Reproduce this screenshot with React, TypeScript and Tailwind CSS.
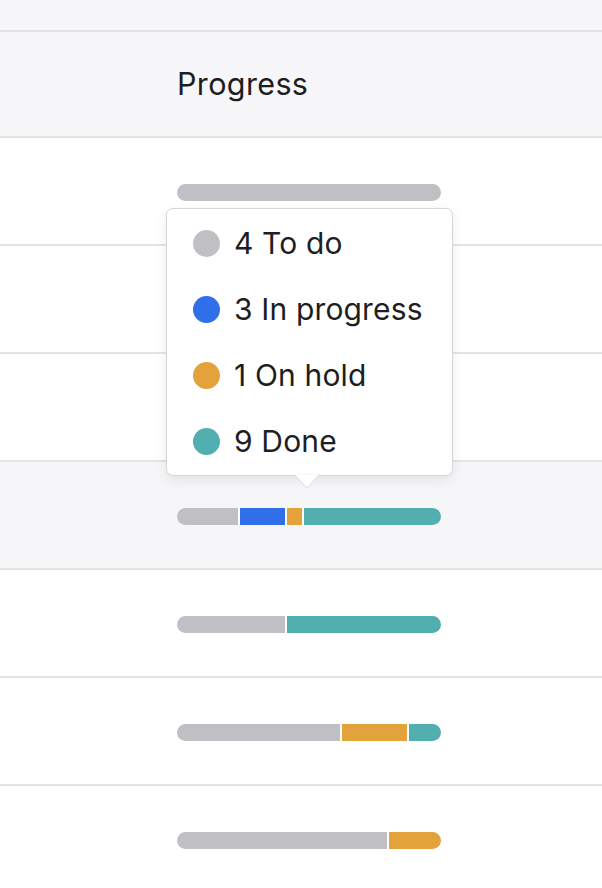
const COLORS = {
  todo: 'bg-[#c0bfc4]',
  progress: 'bg-[#2f6fe9]',
  hold: 'bg-[#e3a23a]',
  done: 'bg-[#51afb0]',
};

type Seg = { key: keyof typeof COLORS; count: number };

const rows: { segs: Seg[]; hover?: boolean }[] = [
  { segs: [{ key: 'todo', count: 1 }] },
  { segs: [{ key: 'todo', count: 1 }] },
  { segs: [{ key: 'todo', count: 1 }] },
  {
    segs: [
      { key: 'todo', count: 4 },
      { key: 'progress', count: 3 },
      { key: 'hold', count: 1 },
      { key: 'done', count: 9 },
    ],
    hover: true,
  },
  {
    segs: [
      { key: 'todo', count: 7 },
      { key: 'done', count: 10 },
    ],
  },
  {
    segs: [
      { key: 'todo', count: 10 },
      { key: 'hold', count: 4 },
      { key: 'done', count: 2 },
    ],
  },
  {
    segs: [
      { key: 'todo', count: 4 },
      { key: 'hold', count: 1 },
    ],
  },
];

const legend = [
  { label: '4 To do', color: COLORS.todo },
  { label: '3 In progress', color: COLORS.progress },
  { label: '1 On hold', color: COLORS.hold },
  { label: '9 Done', color: COLORS.done },
];

function ProgressBar({ segs }: { segs: Seg[] }) {
  return (
    <div className="flex h-[17px] w-[264px] overflow-hidden rounded-full">
      {segs.map((s, i) => (
        <div
          key={i}
          className={`${COLORS[s.key]} h-full ${i > 0 ? 'border-l-2 border-white' : ''}`}
          style={{ flexGrow: s.count, flexBasis: 0 }}
        />
      ))}
    </div>
  );
}

export default function App() {
  return (
    <div
      className="relative min-h-[888px] overflow-hidden bg-white text-[#1e1e22]"
      style={{ fontFamily: 'Inter, "Noto Sans", sans-serif' }}
    >
      <div className="h-[32px] border-b-2 border-[#e4e4e7] bg-[#f7f7f9]" />
      <div className="flex h-[106px] items-center border-b-2 border-[#e4e4e7] bg-[#f7f7f9] pl-[177px]">
        <span className="text-[30.5px] tracking-[0.012em]">Progress</span>
      </div>
      {rows.map((r, i) => (
        <div
          key={i}
          className={`flex h-[108px] items-center border-b-2 border-[#e4e4e7] pl-[177px] pt-[2px] ${
            r.hover ? 'bg-[#f6f6f8]' : 'bg-white'
          }`}
        >
          <ProgressBar segs={r.segs} />
        </div>
      ))}

      {/* Tooltip */}
      <div className="absolute left-[166px] top-[208px] w-[287px] rounded-[7px] border border-[#d6d6da] bg-white py-px shadow-[0_4px_12px_rgba(0,0,0,0.08)]">
        {legend.map((l) => (
          <div key={l.label} className="flex h-[66px] items-center gap-[14px] pl-[26px]">
            <span className={`h-[27px] w-[27px] rounded-full ${l.color}`} />
            <span className="text-[30px] leading-none tracking-[0.005em]">{l.label}</span>
          </div>
        ))}
        <svg
          className="absolute -bottom-[14px] left-[127px]"
          width="26"
          height="15"
          viewBox="0 0 26 15"
        >
          <polygon points="0,0 13,14 26,0" fill="white" stroke="#dcdce0" strokeWidth="1" />
          <rect x="0" y="-1" width="26" height="1.5" fill="white" />
        </svg>
      </div>
    </div>
  );
}
